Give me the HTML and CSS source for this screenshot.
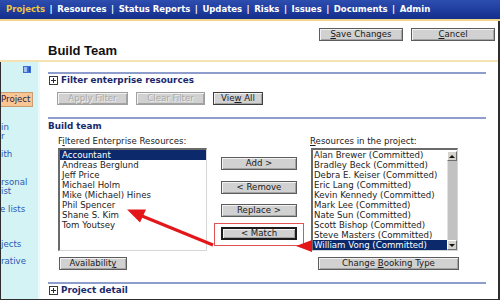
FILE: index.html
```html
<!DOCTYPE html>
<html>
<head>
<meta charset="utf-8">
<title>Build Team</title>
<link rel="stylesheet" href="styles.css">
</head>
<body>
<div class="page">
  <nav class="nav">
    <span class="nav-item nav-active">Projects</span><span class="sep">|</span>
    <span class="nav-item">Resources</span><span class="sep">|</span>
    <span class="nav-item">Status Reports</span><span class="sep">|</span>
    <span class="nav-item">Updates</span><span class="sep">|</span>
    <span class="nav-item">Risks</span><span class="sep">|</span>
    <span class="nav-item">Issues</span><span class="sep">|</span>
    <span class="nav-item">Documents</span><span class="sep">|</span>
    <span class="nav-item">Admin</span>
  </nav>
  <div class="frame">
    <header class="header">
      <h1 class="title">Build Team</h1>
      <div class="header-actions">
        <button class="btn btn-head"><u>S</u>ave Changes</button>
        <button class="btn btn-head"><u>C</u>ancel</button>
      </div>
    </header>
    <div class="content">
      <aside class="sidebar">
        <svg class="side-icon" width="8" height="7" viewBox="0 0 8 7"><rect x="0" y="0" width="8" height="7" fill="#3d6ed6"/><rect x="1" y="1" width="3" height="5" fill="#9fc0f2"/><rect x="6" y="1" width="1" height="5" fill="#2550b0"/></svg>
        <div class="side-current">Project</div>
        <div class="side-link g1">in<br>r</div>
        <div class="side-link g2">ith</div>
        <div class="side-link g3">rsonal<br>ist</div>
        <div class="side-link g4"><span class="cut">e lists</span></div>
        <div class="side-link g5">jects</div>
        <div class="side-link g6">rative</div>
      </aside>
      <main class="main">
        <div class="rule"></div>
        <div class="sec-head">
          <svg class="plus" width="9" height="9" viewBox="0 0 9 9"><rect x="0.5" y="0.5" width="8" height="8" fill="#fff" stroke="#3a3a3a"/><path d="M2 4.5H7M4.5 2V7" stroke="#2a2a2a"/></svg>
          <span>Filter enterprise resources</span>
        </div>
        <div class="filter-btns">
          <button class="btn btn-apply" disabled>Apply Filter</button>
          <button class="btn btn-clear" disabled>Clear Filter</button>
          <button class="btn btn-view">Vie<u>w</u> All</button>
        </div>
        <div class="rule rule-2"></div>
        <div class="sec-title">Build team</div>
        <div class="build">
          <div class="lbl">F<u>i</u>ltered Enterprise Resources:</div>
          <div class="lbl lbl-right"><u>R</u>esources in the project:</div>
          <div class="listbox list-left">
            <div class="items">
              <div class="item selected">Accountant</div>
              <div class="item">Andreas Berglund</div>
              <div class="item">Jeff Price</div>
              <div class="item">Michael Holm</div>
              <div class="item">Mike (Michael) Hines</div>
              <div class="item">Phil Spencer</div>
              <div class="item">Shane S. Kim</div>
              <div class="item">Tom Youtsey</div>
            </div>
          </div>
          <div class="mid">
            <button class="btn btn-mid btn-add">Add &gt;</button>
            <button class="btn btn-mid btn-remove">&lt; Remove</button>
            <button class="btn btn-mid btn-replace">Replace &gt;</button>
            <button class="btn btn-mid btn-match">&lt; Match</button>
          </div>
          <div class="listbox list-right">
            <div class="items">
              <div class="item">Alan Brewer (Committed)</div>
              <div class="item">Bradley Beck (Committed)</div>
              <div class="item">Debra E. Keiser (Committed)</div>
              <div class="item">Eric Lang (Committed)</div>
              <div class="item">Kevin Kennedy (Committed)</div>
              <div class="item">Mark Lee (Committed)</div>
              <div class="item">Nate Sun (Committed)</div>
              <div class="item">Scott Bishop (Committed)</div>
              <div class="item">Steve Masters (Committed)</div>
              <div class="item selected">William Vong (Committed)</div>
            </div>
            <div class="scrollbar">
              <div class="sb-btn"><span class="tri tri-up"></span></div>
              <div class="sb-track"></div>
              <div class="sb-btn"><span class="tri tri-down"></span></div>
            </div>
          </div>
          <button class="btn btn-avail">Availabilit<u>y</u></button>
          <button class="btn btn-booking">Change <u>B</u>ooking Type</button>
        </div>
        <div class="rule rule-3"></div>
        <div class="sec-head">
          <svg class="plus" width="9" height="9" viewBox="0 0 9 9"><rect x="0.5" y="0.5" width="8" height="8" fill="#fff" stroke="#3a3a3a"/><path d="M2 4.5H7M4.5 2V7" stroke="#2a2a2a"/></svg>
          <span>Project detail</span>
        </div>
      </main>
    </div>
  </div>
  <svg class="annot" width="500" height="300" viewBox="0 0 500 300">
    <rect x="214.5" y="223.5" width="89" height="22" fill="none" stroke="#e25454" stroke-width="1"/>
    <line x1="213" y1="245" x2="142" y2="216" stroke="#e3161a" stroke-width="3"/>
    <polygon points="127,209.5 140,222.5 146,209.5" fill="#e3161a"/>
    <polygon points="296,246 312,240 312,252" fill="#e3161a"/>
  </svg>
</div>
</body>
</html>
```

FILE: styles.css
```css
* {
  box-sizing: border-box;
  margin: 0;
  padding: 0;
}

html, body {
  width: 500px;
  height: 300px;
  overflow: hidden;
  background: #ffffff;
}

body {
  font-family: "DejaVu Sans", Verdana, sans-serif;
  font-size: 8.6px;
  color: #1e1e1e;
}

.page {
  position: relative;
  width: 500px;
  height: 300px;
}

/* top navigation */
.nav {
  height: 21px;
  padding-left: 6px;
  display: flex;
  align-items: center;
  padding-bottom: 1px;
  background: linear-gradient(#2d4daf, #1f3d9e 55%, #132d8b);
  border-bottom: 2px solid #efd48a;
  font-weight: bold;
  font-size: 8.5px;
  color: #ffffff;
  white-space: nowrap;
}

.nav-active {
  color: #f0c63c;
}

.sep {
  margin: 0 4.5px;
}

/* frame below nav */
.frame {
  height: 279px;
  border-right: 2px solid #2e2e2e;
  border-bottom: 1px solid #2e2e2e;
  display: flex;
  flex-direction: column;
}

.header {
  height: 41px;
  flex: none;
  display: flex;
  align-items: flex-start;
  padding-left: 48px;
  border-bottom: 2px solid #f5e2b2;
}

.title {
  margin-top: 22px;
  font-family: "Liberation Sans", Arial, sans-serif;
  font-size: 13px;
  line-height: 15px;
  font-weight: bold;
  color: #111111;
}

.header-actions {
  margin-left: auto;
  margin-top: 7px;
  margin-right: 3px;
  display: flex;
  gap: 8px;
}

/* buttons */
.btn {
  font: inherit;
  font-size: 8.6px;
  color: #1a1a1a;
  background: #d1d1d1;
  border: 1px solid #5c5c5c;
  box-shadow: inset 1px 1px 0 #f2f2f2, inset -1px -1px 0 #a4a4a4;
  height: 13px;
  line-height: 11px;
  padding: 0;
  text-align: center;
  white-space: nowrap;
}

.btn:disabled {
  color: #a9a9a9;
  border-color: #a0a0a0;
  text-shadow: 1px 1px 0 #ededed;
}

.btn-head {
  width: 84px;
}

/* content */
.content {
  flex: 1;
  display: flex;
  min-height: 0;
}

.sidebar {
  width: 40px;
  flex: none;
  background: #d3f3f5;
  border-left: 1px solid #2e2e2e;
  border-right: 2px solid #e8fafb;
  overflow: hidden;
  display: flex;
  flex-direction: column;
  color: #2c58b4;
  white-space: nowrap;
}

.side-icon {
  display: block;
  margin-top: 4px;
  margin-left: 22px;
  flex: none;
}

.side-current {
  margin-top: 19px;
  width: 32px;
  height: 15px;
  flex: none;
  background: #f9c592;
  border: 1px solid #c99d74;
  border-left: none;
  color: #1d2550;
  line-height: 13px;
}

.side-link {
  line-height: 9px;
  flex: none;
}

.g1 { margin-top: 16px; }
.g2 { margin-top: 9px; }
.g3 { margin-top: 19px; }
.g4 { margin-top: 9px; }
.g5 { margin-top: 26px; }
.g6 { margin-top: 8px; }

.cut {
  display: block;
  margin-left: -1px;
}

/* main */
.main {
  flex: 1;
  padding-left: 8px;
  padding-top: 10px;
}

.rule {
  width: 438px;
  height: 2px;
  background: #8f9dcc;
}

.rule-2 { margin-top: 12px; }

.sec-head {
  height: 12px;
  display: flex;
  align-items: center;
  gap: 3px;
  padding-left: 1px;
  font-weight: bold;
  font-size: 8.8px;
  color: #1b296c;
}

.plus {
  display: block;
  flex: none;
}

.filter-btns {
  margin-top: 6px;
  padding-left: 9px;
  display: flex;
  gap: 8px;
}

.btn-apply { width: 71px; }
.btn-clear { width: 69px; }
.btn-view { width: 50px; border-color: #3e3e3e; }

.sec-title {
  margin-top: 1px;
  height: 12px;
  line-height: 12px;
  font-weight: bold;
  font-size: 8.8px;
  color: #1b296c;
}

/* build team area */
.build {
  margin-top: 4px;
  margin-left: 10px;
  display: grid;
  grid-template-columns: 149px 76px 147px;
  grid-template-rows: auto auto auto;
  column-gap: 14px;
  row-gap: 0;
  align-items: start;
}

.lbl {
  height: 10px;
  line-height: 10px;
  color: #222222;
  white-space: nowrap;
}

.lbl-right {
  grid-column: 3;
  margin-left: -1px;
}

.listbox {
  grid-row: 2;
  margin-top: 2px;
  height: 103px;
  display: flex;
  background: #ffffff;
  border-top: 2px solid #6a6a6a;
  border-left: 2px solid #6a6a6a;
  border-right: 1px solid #d6d6d6;
  border-bottom: 1px solid #d6d6d6;
  overflow: hidden;
}

.list-left { grid-column: 1; }
.list-right { grid-column: 3; }

.items {
  flex: 1;
  min-width: 0;
}

.item {
  height: 10px;
  line-height: 10px;
  padding-left: 2px;
  white-space: nowrap;
  color: #1c1c1c;
}

.list-right .item {
  padding-left: 1px;
}

.item.selected {
  background: #0c2a6b;
  color: #ffffff;
}

.scrollbar {
  width: 10px;
  flex: none;
  display: flex;
  flex-direction: column;
  margin-top: 1px;
  background: #c6c6c6;
}

.sb-btn {
  height: 10px;
  flex: none;
  background: #d6d3cc;
  border: 1px solid;
  border-color: #ffffff #6e6e6e #6e6e6e #ffffff;
  display: flex;
  align-items: center;
  justify-content: center;
}

.sb-track {
  flex: 1;
  background: #c2c2c2;
  border-left: 1px solid #e2e2e2;
}

.tri {
  width: 0;
  height: 0;
  border-left: 3px solid transparent;
  border-right: 3px solid transparent;
}

.tri-up { border-bottom: 3px solid #111111; }
.tri-down { border-top: 3px solid #111111; }

.mid {
  grid-column: 2;
  grid-row: 2;
  display: flex;
  flex-direction: column;
  padding-top: 11px;
}

.btn-mid {
  width: 76px;
}

.btn-remove { margin-top: 11px; }
.btn-replace { margin-top: 10px; }
.btn-match {
  margin-top: 10px;
  border: 2px solid #1c1c1c;
  line-height: 9px;
}

.btn-avail {
  grid-column: 1;
  grid-row: 3;
  margin-top: 6px;
  margin-left: 1px;
  width: 68px;
}

.btn-booking {
  grid-column: 3;
  grid-row: 3;
  margin-top: 6px;
  margin-left: 7px;
  width: 141px;
}

.rule-3 {
  margin-top: 12px;
}

/* annotation overlay */
.annot {
  position: absolute;
  left: 0;
  top: 0;
  pointer-events: none;
}
```
